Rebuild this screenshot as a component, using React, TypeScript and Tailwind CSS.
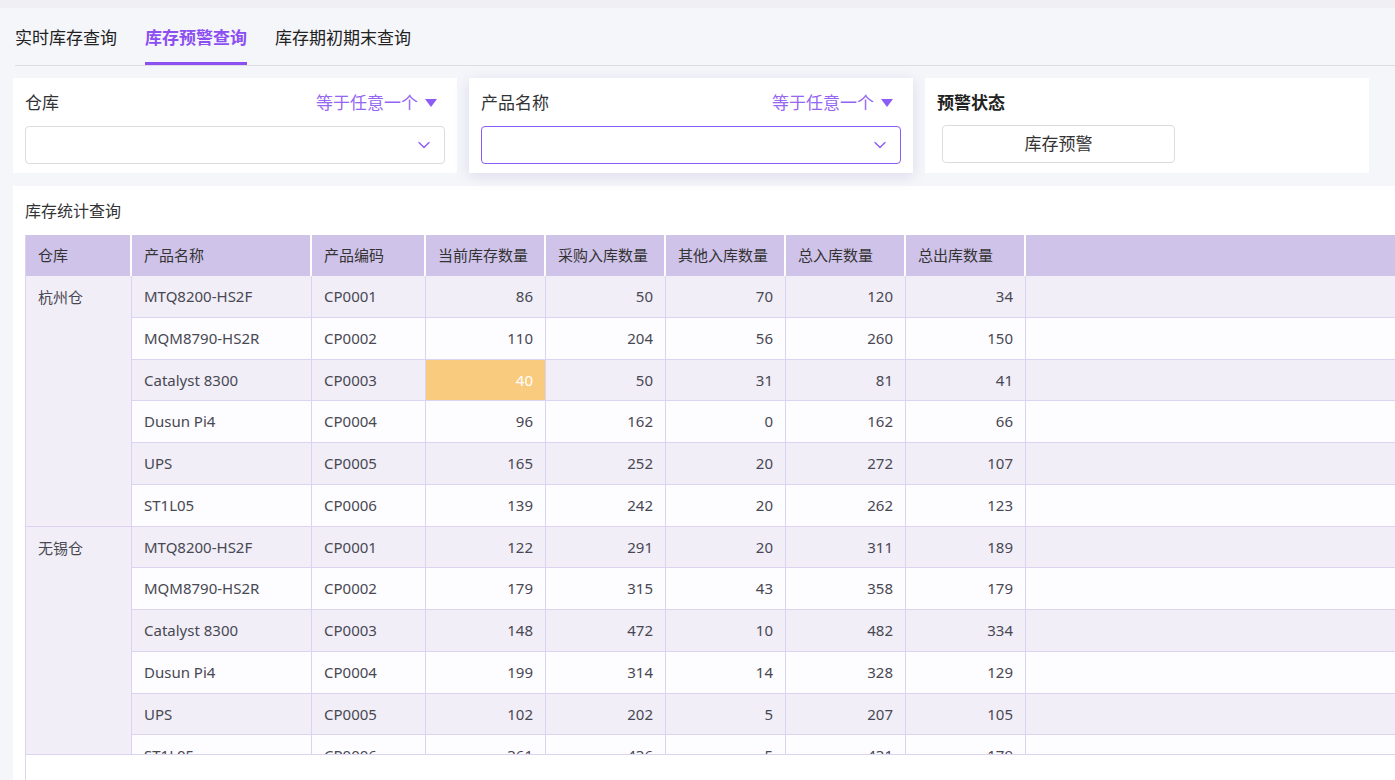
import { ChevronDown } from "lucide-react";

type Row = { name: string; code: string; cur: number; buy: number; other: number; inTotal: number; outTotal: number };

const groups: { wh: string; rows: Row[] }[] = [
  {
    wh: "杭州仓",
    rows: [
      { name: "MTQ8200-HS2F", code: "CP0001", cur: 86, buy: 50, other: 70, inTotal: 120, outTotal: 34 },
      { name: "MQM8790-HS2R", code: "CP0002", cur: 110, buy: 204, other: 56, inTotal: 260, outTotal: 150 },
      { name: "Catalyst 8300", code: "CP0003", cur: 40, buy: 50, other: 31, inTotal: 81, outTotal: 41 },
      { name: "Dusun Pi4", code: "CP0004", cur: 96, buy: 162, other: 0, inTotal: 162, outTotal: 66 },
      { name: "UPS", code: "CP0005", cur: 165, buy: 252, other: 20, inTotal: 272, outTotal: 107 },
      { name: "ST1L05", code: "CP0006", cur: 139, buy: 242, other: 20, inTotal: 262, outTotal: 123 },
    ],
  },
  {
    wh: "无锡仓",
    rows: [
      { name: "MTQ8200-HS2F", code: "CP0001", cur: 122, buy: 291, other: 20, inTotal: 311, outTotal: 189 },
      { name: "MQM8790-HS2R", code: "CP0002", cur: 179, buy: 315, other: 43, inTotal: 358, outTotal: 179 },
      { name: "Catalyst 8300", code: "CP0003", cur: 148, buy: 472, other: 10, inTotal: 482, outTotal: 334 },
      { name: "Dusun Pi4", code: "CP0004", cur: 199, buy: 314, other: 14, inTotal: 328, outTotal: 129 },
      { name: "UPS", code: "CP0005", cur: 102, buy: 202, other: 5, inTotal: 207, outTotal: 105 },
      { name: "ST1L05", code: "CP0006", cur: 361, buy: 436, other: 5, inTotal: 431, outTotal: 179 },
    ],
  },
];

const headers = ["仓库", "产品名称", "产品编码", "当前库存数量", "采购入库数量", "其他入库数量", "总入库数量", "总出库数量", ""];

const cols = "grid grid-cols-[106px_180px_114px_120px_120px_120px_120px_120px_1fr]";

function Caret() {
  return (
    <svg width="12" height="8" viewBox="0 0 12 8" className="ml-[7px]">
      <polygon points="0,0 12,0 6,8" fill="#8b5cf6" />
    </svg>
  );
}

function FilterCard({ label, focused }: { label: string; focused?: boolean }) {
  return (
    <div
      className={`w-[444px] h-[95px] bg-white px-3 pt-[14px] ${
        focused ? "shadow-[0_3px_14px_rgba(110,95,170,0.18)]" : ""
      }`}
    >
      <div className="flex items-center justify-between h-[22px] text-[17px]">
        <span className="text-[#333]">{label}</span>
        <span className="flex items-center text-[#9466f2] mr-[8px]">
          等于任意一个
          <Caret />
        </span>
      </div>
      <div
        className={`mt-[12px] h-[38px] rounded-[4px] border flex items-center justify-end pr-[10px] ${
          focused ? "border-[#8b5cf6]" : "border-[#dcdce0]"
        }`}
      >
        <ChevronDown size={20} strokeWidth={1.6} color="#8b5cf6" />
      </div>
    </div>
  );
}

export default function App() {
  let rowIndex = 0;
  return (
    <div
      className="w-[1395px] h-[780px] overflow-hidden bg-[#f5f6fa] relative"
      style={{ fontFamily: "'Noto Sans', 'Noto Sans CJK SC', sans-serif" }}
    >
      <div className="h-[8px] bg-[#efeff4]" />

      {/* Tabs */}
      <div className="ml-[15px] flex gap-[28px] h-[58px] border-b border-[#dcdce2] text-[17px] items-end">
        <div className="pb-[15px] text-[#222]">实时库存查询</div>
        <div className="pb-[12px] text-[#8b4ff2] font-bold border-b-[3px] border-[#8b4ff2]">库存预警查询</div>
        <div className="pb-[15px] text-[#222]">库存期初期末查询</div>
      </div>

      {/* Filters */}
      <div className="flex gap-[12px] ml-[13px] mt-[12px]">
        <FilterCard label="仓库" />
        <FilterCard label="产品名称" focused />
        <div className="w-[444px] h-[95px] bg-white px-3 pt-[14px]">
          <div className="h-[22px] flex items-center text-[17px] font-bold text-[#222]">预警状态</div>
          <div className="mt-[11px] ml-[5px] w-[233px] h-[38px] rounded-[4px] border border-[#dcdce0] flex items-center justify-center text-[17px] text-[#333]">
            库存预警
          </div>
        </div>
      </div>

      {/* Table card */}
      <div className="ml-[13px] mt-[13px] w-[1420px] h-[600px] bg-white pl-[12px] pt-[14px]">
        <div className="h-[22px] flex items-center text-[16px] text-[#333]">库存统计查询</div>
        <div className="mt-[13px] border-l border-[#dcd3f1]">
          <div className={`${cols} h-[41px] bg-[#d0c3ea] text-[15px] text-[#333]`}>
            {headers.map((h, i) => (
              <div key={i} className="px-[12px] flex items-center border-r-2 border-white">
                {h}
              </div>
            ))}
          </div>
          <div className="h-[479px] overflow-hidden border-b border-[#dcd3f1]">
            <div className={`${cols} auto-rows-[41.75px] text-[15px] text-[#484852]`}>
              {groups.map((g) => {
                const cells = [
                  <div
                    key={g.wh}
                    className="row-span-6 bg-[#f1eef8] border-r border-b border-[#dcd3f1] px-[12px] pt-[10px]"
                  >
                    {g.wh}
                  </div>,
                ];
                g.rows.forEach((r) => {
                  const bg = rowIndex % 2 === 0 ? "bg-[#f1eef8]" : "bg-[#fdfcff]";
                  rowIndex++;
                  const warn = r.cur < 50;
                  const base = `${bg} border-r border-b border-[#dcd3f1] flex items-center`;
                  cells.push(
                    <div key={g.wh + r.code + "n"} className={`${base} px-[12px]`}>{r.name}</div>,
                    <div key={g.wh + r.code + "c"} className={`${base} px-[12px]`}>{r.code}</div>,
                    <div
                      key={g.wh + r.code + "q"}
                      className={`border-r border-b border-[#dcd3f1] flex items-center justify-end px-[12px] ${
                        warn ? "bg-[#f9cb7e] text-white" : bg
                      }`}
                    >
                      {r.cur}
                    </div>,
                    <div key={g.wh + r.code + "b"} className={`${base} justify-end px-[12px]`}>{r.buy}</div>,
                    <div key={g.wh + r.code + "o"} className={`${base} justify-end px-[12px]`}>{r.other}</div>,
                    <div key={g.wh + r.code + "i"} className={`${base} justify-end px-[12px]`}>{r.inTotal}</div>,
                    <div key={g.wh + r.code + "t"} className={`${base} justify-end px-[12px]`}>{r.outTotal}</div>,
                    <div key={g.wh + r.code + "e"} className={`${bg} border-b border-[#dcd3f1]`} />
                  );
                });
                return cells;
              })}
            </div>
          </div>
          <div className="h-[40px]" />
        </div>
      </div>
    </div>
  );
}
